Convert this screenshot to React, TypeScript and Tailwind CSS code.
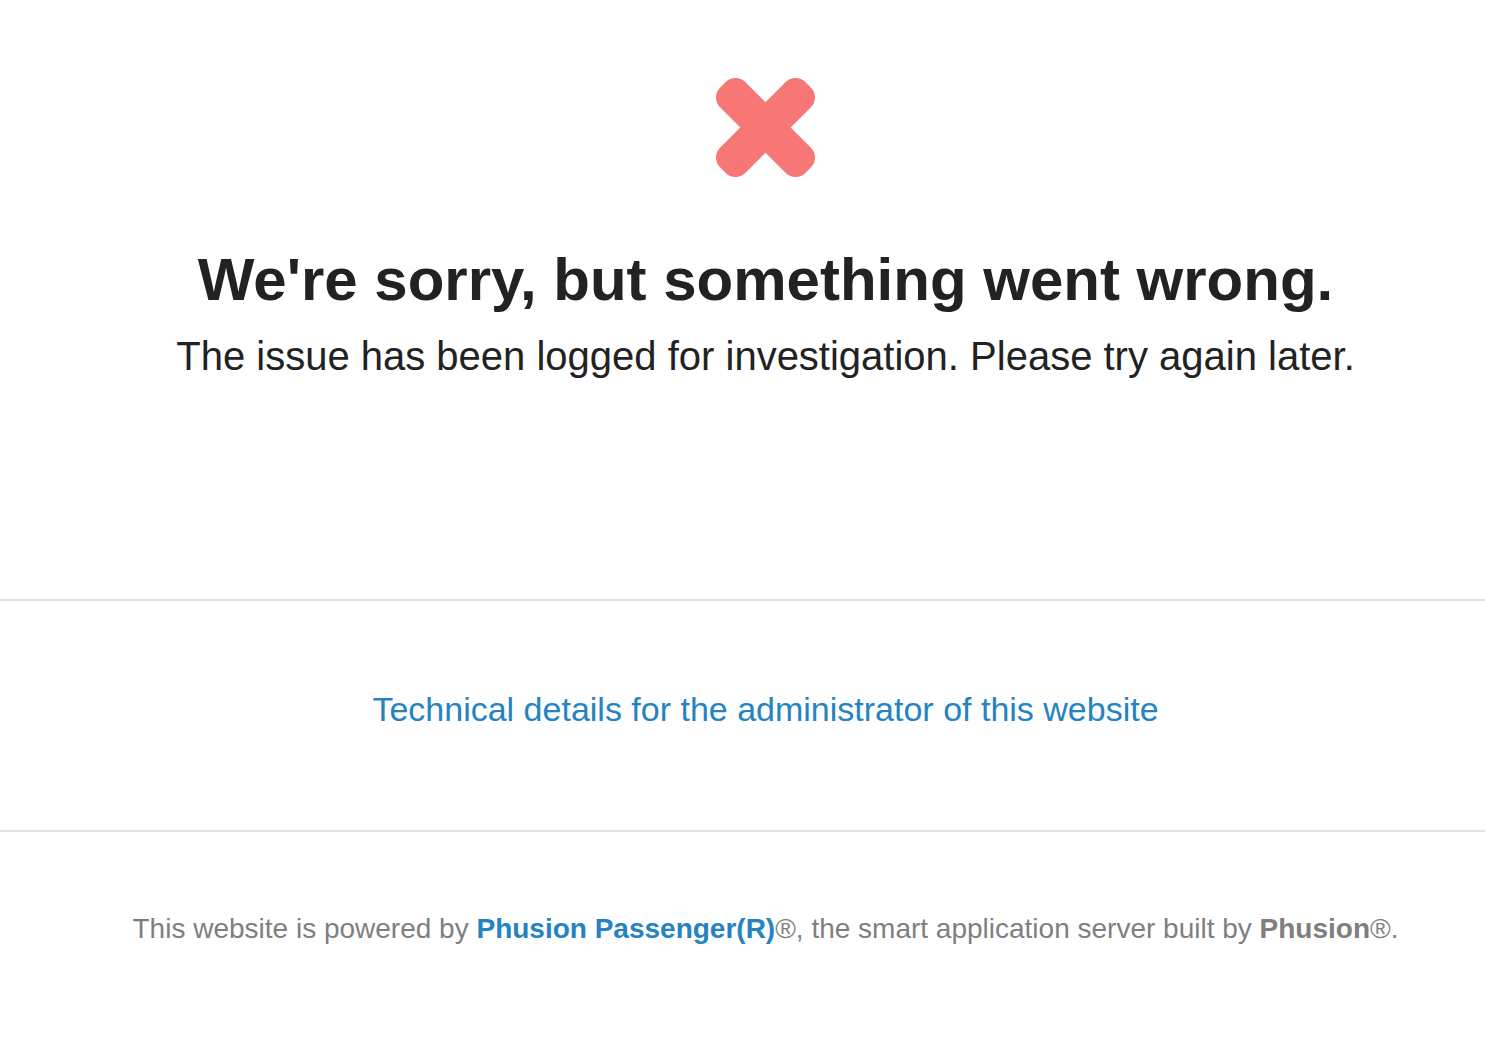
export default function App() {
  return (
    <div className="min-h-screen bg-white font-['Liberation_Sans',Arial,sans-serif] text-[#222]">
      <section className="flex flex-col items-center pl-[46px] pt-[78px] pb-[219px]">
        <svg width="99" height="99" viewBox="0 0 100 100" aria-hidden="true">
          <g transform="rotate(45 50 50)">
            <rect x="-10.9" y="32" width="121.8" height="36" rx="14" fill="#f77676" />
            <rect x="32" y="-10.9" width="36" height="121.8" rx="14" fill="#f77676" />
          </g>
        </svg>
        <h1 className="mt-[67px] text-[60px] leading-[72px] font-bold">
          We're sorry, but something went wrong.
        </h1>
        <p className="mt-[16px] text-[40px] leading-[48px]">
          The issue has been logged for investigation. Please try again later.
        </p>
      </section>
      <hr className="border-t-2 border-[#e3e3e3]" />
      <section className="flex justify-center pl-[46px] pt-[81px] pb-[94px]">
        <a href="#" className="text-[34px] leading-[54px] text-[#2583c1]">
          Technical details for the administrator of this website
        </a>
      </section>
      <hr className="border-t-2 border-[#e3e3e3]" />
      <footer className="flex justify-center pl-[46px] pt-[79px] text-[28px] leading-[36px] text-[#7f7f7f]">
        <p>
          This website is powered by{" "}
          <a href="#" className="font-bold text-[#2583c1]">
            Phusion Passenger(R)
          </a>
          ®, the smart application server built by{" "}
          <a href="#" className="font-bold text-[#7f7f7f]">
            Phusion
          </a>
          ®.
        </p>
      </footer>
    </div>
  );
}
